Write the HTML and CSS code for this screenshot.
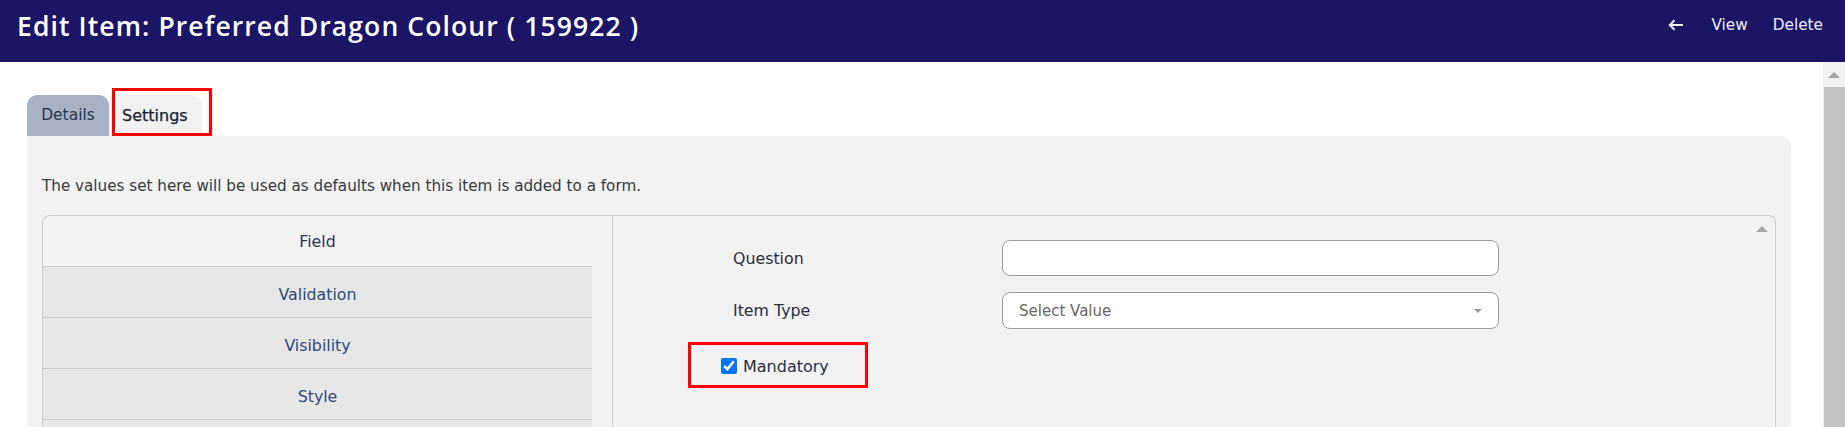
FILE: index.html
```html
<!DOCTYPE html>
<html>
<head>
<meta charset="utf-8">
<link rel="stylesheet" href="styles.css">
</head>
<body>
<header class="topbar">
  <h1 class="title">Edit Item: Preferred Dragon Colour ( 159922 )</h1>
  <nav class="actions">
    <svg class="back" width="16" height="12" viewBox="0 0 16 12"><path d="M15 6H2M6.5 1.3L1.8 6l4.7 4.7" fill="none" stroke="#f0f0f6" stroke-width="2"/></svg>
    <span class="action">View</span>
    <span class="action">Delete</span>
  </nav>
</header>
<div class="main">
  <div class="content">
    <div class="tabs">
      <div class="tab tab-details">Details</div>
      <div class="tab tab-settings">Settings<span class="annot annot-tab"></span></div>
    </div>
    <div class="panel">
      <p class="desc">The values set here will be used as defaults when this item is added to a form.</p>
      <div class="box">
        <div class="sidenav">
          <div class="navrow active">Field</div>
          <div class="navrow">Validation</div>
          <div class="navrow">Visibility</div>
          <div class="navrow">Style</div>
          <div class="navrow"></div>
        </div>
        <div class="pane">
          <span class="pane-up"></span>
          <div class="form">
            <label class="flabel">Question</label>
            <div class="input"></div>
            <label class="flabel">Item Type</label>
            <div class="input select"><span class="placeholder">Select Value</span><span class="caret"></span></div>
          </div>
          <div class="check-row">
            <span class="annot annot-check"></span>
            <input type="checkbox" class="cb" checked>
            <span class="check-label">Mandatory</span>
          </div>
        </div>
      </div>
    </div>
  </div>
  <div class="scrollbar">
    <div class="sb-up"><span class="sb-arrow"></span></div>
    <div class="sb-thumb"></div>
  </div>
</div>
</body>
</html>
```
FILE: styles.css
```css
html, body {
  margin: 0;
  padding: 0;
  background: #fff;
  overflow: hidden;
}
body {
  font-family: "DejaVu Sans", "Open Sans", sans-serif;
  color: #333;
  height: 427px;
}
.topbar {
  height: 62px;
  background: #1c1565;
  display: flex;
  justify-content: space-between;
  align-items: flex-start;
  padding: 0 22px 0 17px;
  box-sizing: border-box;
}
.title {
  margin: 0;
  padding-top: 10px;
  font-family: "Open Sans", sans-serif;
  font-size: 26.5px;
  line-height: 32px;
  font-weight: 600;
  color: #fff;
  letter-spacing: 1.1px;
}
.actions {
  display: flex;
  align-items: center;
  gap: 25px;
  padding-top: 12px;
  color: #ececf4;
  font-size: 15.3px;
  line-height: 26px;
}
.back {
  margin-right: 2px;
}
.main {
  display: flex;
  height: 365px;
}
.content {
  flex: 1;
  padding: 33px 32px 0 27px;
  overflow: hidden;
}
.tabs {
  display: flex;
  align-items: flex-end;
}
.tab {
  height: 41px;
  line-height: 41px;
  font-size: 15.5px;
  box-sizing: border-box;
}
.tab-details {
  width: 82px;
  background: #a8b2c6;
  color: #2b3550;
  border-radius: 10px 10px 0 0;
  text-align: center;
}
.tab-settings {
  position: relative;
  width: 93px;
  background: #f2f2f2;
  color: #1a2030;
  padding-left: 13px;
  font-size: 16px;
  border-radius: 0 10px 0 0;
  -webkit-text-stroke: 0.25px #1a2030;
}
.annot {
  position: absolute;
  border: 3px solid #ff0000;
  box-sizing: border-box;
}
.annot-tab {
  left: 3px;
  top: -7px;
  width: 100px;
  height: 48px;
}
.panel {
  background: #f2f2f2;
  border-radius: 0 10px 0 0;
  padding: 40px 15px 0 15px;
  height: 300px;
  box-sizing: border-box;
}
.desc {
  margin: 0 0 19px 0;
  font-size: 15.2px;
  line-height: 20px;
  color: #3a3a3a;
}
.box {
  display: flex;
  border: 1px solid #cdcdcd;
  border-bottom: none;
  border-radius: 8px 7px 0 0;
  height: 260px;
}
.sidenav {
  width: 549px;
  display: flex;
  flex-direction: column;
}
.navrow {
  flex: 0 0 51px;
  height: 51px;
  border-bottom: 1px solid #cdcdcd;
  box-sizing: border-box;
  background: #e7e7e7;
  text-align: center;
  line-height: 55px;
  font-size: 15.8px;
  color: #2e4a78;
  overflow: hidden;
}
.navrow.active {
  background: #f2f2f2;
  color: #2b3350;
  border-top-left-radius: 8px;
  line-height: 51px;
}
.pane {
  position: relative;
  flex: 1;
  margin-left: 20px;
  border-left: 1px solid #cdcdcd;
  padding: 24px 0 0 120px;
}
.pane-up {
  position: absolute;
  right: 7px;
  top: 10px;
  width: 0;
  height: 0;
  border-left: 6px solid transparent;
  border-right: 6px solid transparent;
  border-bottom: 6px solid #a6a6a6;
}
.form {
  display: grid;
  grid-template-columns: 269px 497px;
  row-gap: 16px;
  align-items: center;
}
.flabel {
  font-size: 15.8px;
  color: #2d2d3a;
}
.input {
  height: 36px;
  background: #fff;
  border: 1px solid #9c9c9c;
  border-radius: 8px;
  box-sizing: border-box;
}
.select {
  height: 37px;
  display: flex;
  align-items: center;
  justify-content: space-between;
  padding: 0 16px;
}
.placeholder {
  font-size: 15px;
  color: #666;
}
.caret {
  width: 0;
  height: 0;
  border-left: 4px solid transparent;
  border-right: 4px solid transparent;
  border-top: 4px solid #999;
}
.check-row {
  position: relative;
  display: flex;
  align-items: center;
  gap: 6px;
  margin: 29px 0 0 -12px;
  height: 16px;
}
.annot-check {
  left: -33px;
  top: -16px;
  width: 180px;
  height: 46px;
}
.cb {
  width: 16px;
  height: 16px;
  margin: 0;
  accent-color: #0075ff;
}
.check-label {
  font-size: 16px;
  color: #2d2d3a;
}
.scrollbar {
  width: 22px;
  display: flex;
  flex-direction: column;
  background: #f1f1f1;
}
.sb-up {
  height: 25px;
  display: flex;
  align-items: center;
  justify-content: center;
}
.sb-arrow {
  width: 0;
  height: 0;
  border-left: 6px solid transparent;
  border-right: 6px solid transparent;
  border-bottom: 6px solid #a3a3a3;
}
.sb-thumb {
  flex: 1;
  margin-left: 1px;
  background: #c1c1c1;
}
```
